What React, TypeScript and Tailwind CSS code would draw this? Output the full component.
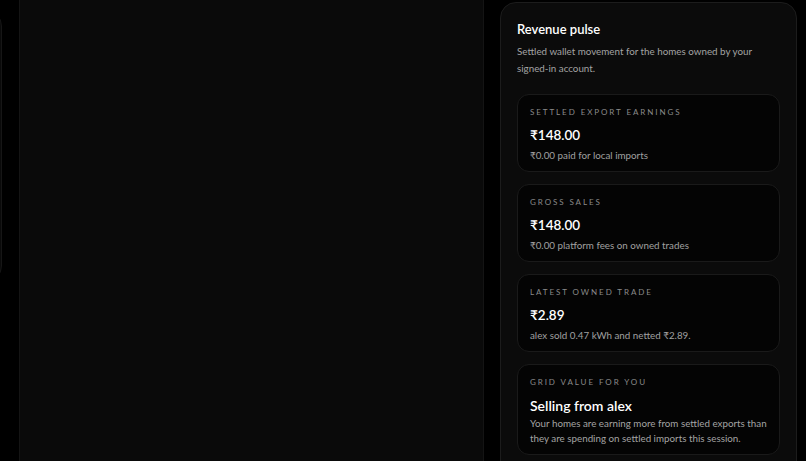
const cards = [
  { label: 'Settled export earnings', value: '₹148.00', note: '₹0.00 paid for local imports' },
  { label: 'Gross sales', value: '₹148.00', note: '₹0.00 platform fees on owned trades' },
  { label: 'Latest owned trade', value: '₹2.89', note: 'alex sold 0.47 kWh and netted ₹2.89.' },
];

function StatCard({ label, value, note }: { label: string; value: string; note: string }) {
  return (
    <div className="rounded-xl border border-[#1a1a1a] bg-[#040404] px-3 pt-3 pb-2">
      <div className="text-[8px] leading-[10px] uppercase tracking-[0.24em] text-[#8a8a8a]">{label}</div>
      <div className="mt-[9px] text-[13.5px] leading-[18px] font-semibold text-white">{value}</div>
      <div className="mt-[3px] text-[9.8px] leading-[16px] text-[#a0a0a0]">{note}</div>
    </div>
  );
}

export default function App() {
  return (
    <div
      className="h-[461px] w-[806px] overflow-hidden bg-black"
      style={{ fontFamily: "Lato, 'Noto Sans', 'DejaVu Sans', sans-serif" }}
    >
      <div className="flex items-start gap-4">
        {/* left panel, mostly scrolled off to the side */}
        <div className="-ml-[198px] mt-[10px] h-[272px] w-[200px] shrink-0 rounded-2xl border border-[#161616] bg-[#0a0a0a]" />

        {/* main canvas */}
        <div className="-mt-4 ml-[1px] h-[500px] w-[465px] shrink-0 border-x border-[#141414] bg-[#0a0a0a]" />

        {/* revenue pulse */}
        <section className="mt-[2px] h-[480px] w-[297px] shrink-0 rounded-2xl border border-[#1c1c1c] bg-[#0b0b0b] p-4">
          <h2 className="text-[13px] leading-[20px] font-semibold text-white">Revenue pulse</h2>
          <p className="mt-1 text-[9.8px] leading-[17px] text-[#a3a3a3]">
            Settled wallet movement for the homes owned by your signed-in account.
          </p>

          <div className="mt-[17px] flex flex-col gap-3">
            {cards.map((c) => (
              <StatCard key={c.label} {...c} />
            ))}

            <div className="rounded-xl border border-[#1a1a1a] bg-[#040404] px-3 pt-3 pb-2">
              <div className="text-[8px] leading-[10px] uppercase tracking-[0.24em] text-[#8a8a8a]">Grid value for you</div>
              <div className="mt-[9px] text-[14px] leading-[20px] font-semibold text-white">Selling from alex</div>
              <p className="text-[9.8px] leading-[15px] text-[#a3a3a3]">
                Your homes are earning more from settled exports than they are spending on settled imports this session.
              </p>
            </div>
          </div>
        </section>
      </div>
    </div>
  );
}
